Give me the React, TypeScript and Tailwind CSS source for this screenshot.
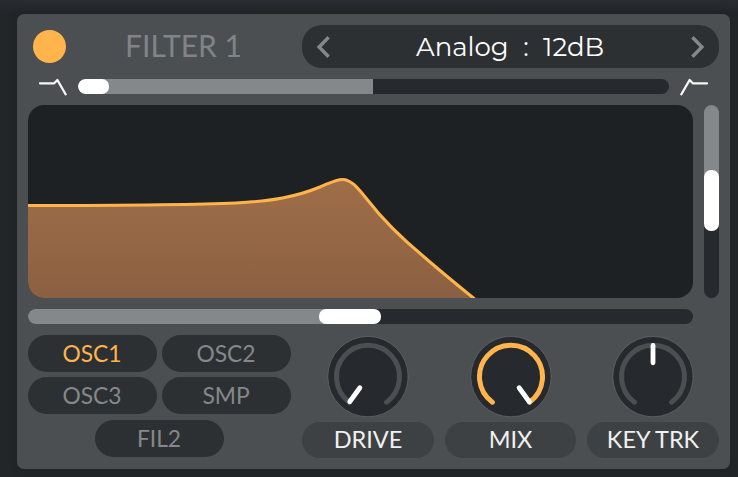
import React from "react";

const ARC = "M21.9 66.1 A31.5 31.5 0 1 1 59.1 66.1";

function Knob({ label, angle, active = false, width }: { label: string; angle: number; active?: boolean; width: string }) {
  return (
    <div className={`flex flex-col items-center ${width}`}>
      <svg width="82" height="82" viewBox="-0.5 -0.1 82 82" fill="none" strokeLinecap="round">
        <circle cx="40.5" cy="40.5" r="40.2" fill="#26292d" stroke="#676a6c" strokeWidth="0.7" />
        <path d={ARC} stroke={active ? "#ffb54c" : "#4b4f51"} strokeWidth="5" />
        <path d="M40.5 9.4V26.7" stroke="#fff" strokeWidth="4.8" transform={`rotate(${angle} 40.5 40.5)`} />
      </svg>
      <div className="mt-1 flex h-9 w-full items-center justify-center rounded-[18px] bg-[#3e4143] text-[23.5px] leading-none text-[#f0f0f0]">
        {label}
      </div>
    </div>
  );
}

function Route({ label, active = false }: { label: string; active?: boolean }) {
  return (
    <button
      className={`flex h-[37px] w-[129px] items-center justify-center rounded-[18.5px] bg-[#2d3032] pr-px text-[22.8px] leading-none ${
        active ? "text-[#ffb54c]" : "text-[#85888a]"
      }`}
    >
      {label}
    </button>
  );
}

function Chevron({ flip = false }: { flip?: boolean }) {
  return (
    <svg width="14" height="22" viewBox="0 0 14 22" fill="none" className={flip ? "-scale-x-100" : ""}>
      <path d="M12.6 1.2L3.1 11L12.6 20.8" stroke="#85888a" strokeWidth="3.4" />
    </svg>
  );
}

function Slope({ flip = false }: { flip?: boolean }) {
  return (
    <svg width="30" height="20" viewBox="0 0 30 20" fill="none" className={flip ? "-scale-x-100" : ""}>
      <path d="M3 6.3H17.2L20.4 3L28.6 17.3" stroke="#f7f7f5" strokeWidth="2.3" strokeLinecap="round" strokeLinejoin="round" />
    </svg>
  );
}

const CURVE =
  "M-3 100.6 C95 100.4 162 100.2 208 98 C244 96.2 268 91.8 292 82 C302 77.8 308 74.4 314.5 74.4 C324 74.4 331 84.5 340 95.5 C352 111 374 133.5 395 151 C414 167.5 430 180.5 449 196";

export default function App() {
  return (
    <div className="h-[477px] w-[738px] bg-[linear-gradient(180deg,#292d31_0,#222629_14px,#222628_100%)] pt-3.5 pl-[17px] font-['Lato',sans-serif]">
      <main className="flex h-[455px] w-[713px] flex-col rounded-[7px] bg-[#4b4f51] px-[11px] pt-[11px] shadow-[0_0_10px_#191c1f66]">
        <header className="flex h-[43px] items-center">
          <span className="ml-[5px] h-[33px] w-[33px] rounded-full bg-[#ffb54c]" />
          <h1 className="w-[236px] pr-px pb-[3px] text-center text-[30px] leading-none text-[#808487]">FILTER 1</h1>
          <div className="flex h-[43px] w-[417px] items-center justify-between rounded-[20px] bg-[#2d3032] px-3.5">
            <Chevron />
            <div className="flex items-center pt-px font-['Montserrat','Inter',sans-serif] text-[26px] leading-none text-white">
              <span className="w-[93px]">Analog</span>
              <span className="w-[34px] text-center">:</span>
              <span className="w-[62px]">12dB</span>
            </div>
            <Chevron flip />
          </div>
        </header>
        <div className="mt-[11px] flex h-[15px] items-center">
          <div className="ml-[9px] w-[41px]"><Slope /></div>
          <div className="flex h-[15px] w-[591px] overflow-hidden rounded-[7.5px] bg-[#26292d]">
            <div className="w-[295px] bg-[#85888a]"><div className="h-full w-[31px] rounded-[7px] bg-white" /></div>
          </div>
          <div className="ml-[11px]"><Slope flip /></div>
        </div>
        <div className="mt-[11px] flex gap-[11px]">
          <div className="h-[193px] w-[665px] overflow-hidden rounded-[16px] bg-[#1e2124]">
            <svg width="665" height="193" viewBox="0 0 665 193">
              <defs>
                <linearGradient id="response" x1="0" y1="74" x2="0" y2="193" gradientUnits="userSpaceOnUse">
                  <stop stopColor="#a06e48" />
                  <stop offset="1" stopColor="#8a6042" />
                </linearGradient>
              </defs>
              <path d={`${CURVE}H-3Z`} fill="url(#response)" />
              <path d={CURVE} fill="none" stroke="#ffb54c" strokeWidth="3" />
            </svg>
          </div>
          <div className="h-[193px] w-[15px] overflow-hidden rounded-[7.5px] bg-[#26292d]">
            <div className="flex h-[126px] items-end bg-[linear-gradient(#85888a_96px,#26292d_96px)]">
              <div className="h-[61px] w-full rounded-[7px] bg-white" />
            </div>
          </div>
        </div>
        <div className="mt-[11px] h-[15px] w-[665px] overflow-hidden rounded-[7.5px] bg-[#26292d]">
          <div className="flex h-full w-[353px] justify-end bg-[linear-gradient(90deg,#85888a_322px,#26292d_322px)]">
            <div className="h-full w-[62px] rounded-[7px] bg-white" />
          </div>
        </div>
        <section className="mt-[11px] flex">
          <div className="w-[274px]">
            <div className="grid grid-cols-[129px_129px] gap-[5px]">
              <Route label="OSC1" active />
              <Route label="OSC2" />
              <Route label="OSC3" />
              <Route label="SMP" />
            </div>
            <div className="mt-1.5 ml-[67px]"><Route label="FIL2" /></div>
          </div>
          <div className="flex gap-[11px] pt-px">
            <Knob label="DRIVE" angle={-144} width="w-[132px]" />
            <Knob label="MIX" angle={144} active width="w-[131px]" />
            <Knob label="KEY TRK" angle={0} width="w-[132px]" />
          </div>
        </section>
      </main>
    </div>
  );
}
